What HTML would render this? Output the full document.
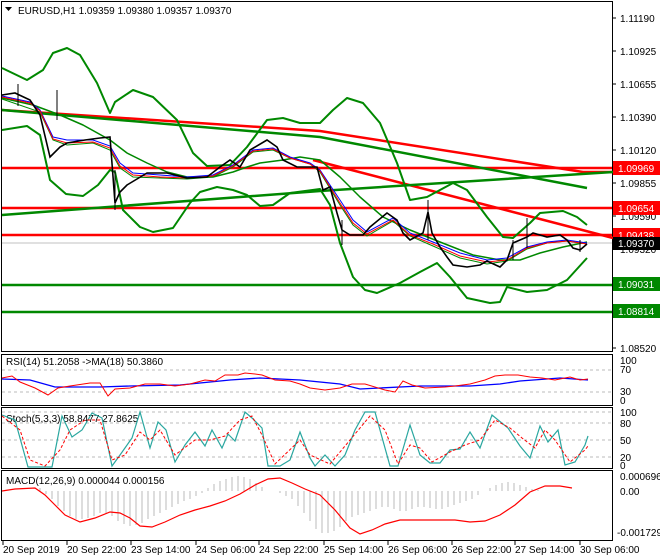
<!DOCTYPE html>
<html><head><style>
body{margin:0;background:#fff}
svg{display:block;font-family:"Liberation Sans",sans-serif;font-size:10px}
</style></head><body>
<svg width="660" height="560" viewBox="0 0 660 560">
<rect width="660" height="560" fill="#fff"/>
<g fill="none" stroke="#000" stroke-width="1">
<rect x="1.5" y="1.5" width="611" height="350"/>
<rect x="1.5" y="354.5" width="611" height="51"/>
<rect x="1.5" y="407.5" width="611" height="61"/>
<rect x="1.5" y="470.5" width="611" height="70"/>
</g>
<g stroke="#000">
<line x1="612" y1="18" x2="616" y2="18"/><line x1="612" y1="51" x2="616" y2="51"/><line x1="612" y1="84" x2="616" y2="84"/><line x1="612" y1="117" x2="616" y2="117"/><line x1="612" y1="150" x2="616" y2="150"/><line x1="612" y1="183" x2="616" y2="183"/><line x1="612" y1="216" x2="616" y2="216"/><line x1="612" y1="249" x2="616" y2="249"/><line x1="612" y1="282" x2="616" y2="282"/><line x1="612" y1="315" x2="616" y2="315"/><line x1="612" y1="348" x2="616" y2="348"/>
</g>
<g fill="#000">
<text x="620" y="22">1.11190</text><text x="620" y="55">1.10925</text><text x="620" y="88">1.10655</text><text x="620" y="121">1.10390</text><text x="620" y="154">1.10120</text><text x="620" y="187">1.09855</text><text x="620" y="220">1.09590</text><text x="620" y="253">1.09320</text><text x="620" y="352">1.08520</text>
</g>
<g stroke="#bbb" stroke-dasharray="3,3">
<line x1="2" y1="370" x2="612" y2="370"/><line x1="2" y1="392" x2="612" y2="392"/>
<line x1="2" y1="412" x2="612" y2="412"/><line x1="2" y1="423" x2="612" y2="423"/><line x1="2" y1="440" x2="612" y2="440"/><line x1="2" y1="457" x2="612" y2="457"/>
</g>
<line x1="2" y1="243" x2="612" y2="243" stroke="#c0c0c0"/>
<g stroke-width="2.5">
<line x1="2" y1="168" x2="612" y2="168" stroke="#f00"/>
<line x1="2" y1="208" x2="612" y2="208" stroke="#f00"/>
<line x1="2" y1="235" x2="612" y2="235" stroke="#f00"/>
<line x1="2" y1="285" x2="612" y2="285" stroke="#080"/>
<line x1="2" y1="312" x2="612" y2="312" stroke="#080"/>
</g>
<g stroke-width="2.5" fill="none">
<polyline points="2,110 320,131 583,172 612,172" stroke="#f00"/>
<polyline points="2,110 320,137 587,188" stroke="#080"/>
<polyline points="313,160 613,238" stroke="#f00"/>
<polyline points="2,215 320,191 613,172" stroke="#080"/>
</g>
<g stroke="#080" stroke-width="2" fill="none" stroke-linejoin="round">
<polyline points="2,68 27,80 43,70 53,53 67,48 80,55 97,83 110,113 115,102 133,90 153,97 177,120 193,153 207,166 230,165 247,147 267,120 283,118 300,123 320,123 333,110 347,98 363,103 380,123 397,163 410,200 427,197 453,183 467,190 487,217 503,237 513,238 530,223 540,213 563,211 577,217 587,225"/>
<polyline points="2,130 27,126 40,135 50,180 66,194 83,196 98,185 110,170 115,172 123,210 140,227 153,232 173,228 190,203 200,192 217,187 233,190 247,195 260,206 273,205 290,193 320,189 330,205 340,243 353,277 365,290 377,293 400,283 420,272 437,263 450,277 467,298 490,303 500,302 507,287 527,292 547,290 567,280 587,258"/>
<polyline points="2,98 33,105 60,115 83,125 110,140 127,153 147,163 167,172 187,177 213,177 233,172 247,167 260,163 283,160 300,157 320,160 340,177 360,197 383,217 410,230 440,242 473,255 500,260 520,260 540,253 563,247 587,242" stroke-width="1.5"/>
</g>
<polyline fill="none" stroke="#080" stroke-width="1" points="2,99 40,112 53,140 67,145 93,143 110,150 120,168 133,177 160,178 187,179 213,177 233,167 253,152 273,150 290,158 310,164 320,172 340,205 353,225 367,236 393,221 410,236 433,246 460,258 487,264 507,261 527,249 547,243 567,241 587,244"/>
<polyline fill="none" stroke="#00f" stroke-width="1" points="2,96 30,102 40,110 53,137 67,140 93,140 110,146 120,163 133,173 160,175 187,177 213,175 233,165 253,150 273,148 290,157 310,163 320,170 340,200 353,220 367,232 393,218 410,233 433,242 460,253 487,260 507,258 527,247 547,242 567,240 587,243"/>
<polyline fill="none" stroke="#f00" stroke-width="1" points="2,97 30,103 40,111 53,139 67,143 93,142 110,148 120,166 133,175 160,177 187,178 213,176 233,166 253,151 273,149 290,158 310,164 320,171 340,203 353,223 367,234 393,220 410,235 433,244 460,256 487,262 507,260 527,248 547,243 567,241 587,244"/>
<polyline fill="none" stroke="#000" stroke-width="1.6" points="2,95 15,93 30,100 40,115 50,157 60,147 67,143 85,140 100,138 110,137 115,203 120,192 127,185 147,173 167,173 187,178 207,177 220,167 230,160 240,167 250,150 267,140 277,147 283,160 297,167 317,167 323,190 330,187 337,213 342,230 350,235 363,235 370,227 387,213 397,220 403,233 410,240 423,233 428,212 432,233 440,247 447,257 453,265 467,267 480,265 487,261 500,267 507,260 513,243 527,237 533,233 547,237 560,235 567,240 573,248 580,250 587,244"/>
<g stroke="#000" stroke-width="1"><path d="M18,84v22M57,90v30M115,170v40M342,220v25M428,200v40M513,240v20M527,218v30M580,240v12"/></g>
<g font-size="10">
<rect x="613" y="161" width="47" height="14" fill="#f00"/><text x="618" y="172" fill="#fff">1.09969</text>
<rect x="613" y="201" width="47" height="14" fill="#f00"/><text x="618" y="212" fill="#fff">1.09654</text>
<rect x="613" y="228" width="47" height="14" fill="#f00"/><text x="618" y="239" fill="#fff">1.09438</text>
<rect x="613" y="237" width="47" height="13" fill="#000"/><text x="618" y="247" fill="#fff">1.09370</text>
<rect x="613" y="277" width="47" height="14" fill="#080"/><text x="618" y="288" fill="#fff">1.09031</text>
<rect x="613" y="304" width="47" height="14" fill="#080"/><text x="618" y="315" fill="#fff">1.08814</text>
</g>
<polygon points="5,7 12,7 8.5,11" fill="#000"/>
<text x="18" y="14" fill="#000">EURUSD,H1  1.09359 1.09380 1.09357 1.09370</text>
<text x="6" y="365">RSI(14) 51.2058  -&gt;MA(18) 50.3860</text>
<polyline fill="none" stroke="#00f" stroke-width="1.3" points="2,379 30,380 55,387 100,387 130,386 180,385 230,380 260,378 300,380 340,384 360,389 420,386 470,386 500,384 520,381 560,378 588,380"/>
<polyline fill="none" stroke="#f00" stroke-width="1" points="2,378 12,376 20,382 35,388 48,395 58,388 70,386 90,383 100,383 108,396 115,389 130,388 145,384 160,384 175,386 190,384 205,380 215,381 225,375 238,375 245,373 255,374 262,375 275,380 290,381 300,384 310,388 325,390 340,388 352,384 365,384 385,390 395,392 403,381 412,385 425,388 445,387 455,386 470,384 485,380 495,376 505,375 518,375 530,377 542,378 555,380 570,377 580,380 588,379"/>
<g font-size="10"><text x="620" y="364">100</text><text x="620" y="373">70</text><text x="620" y="395">30</text><text x="620" y="404">0</text></g>
<text x="6" y="422">Stoch(5,3,3) 58.8477 27.8625</text>
<polyline fill="none" stroke="#2aa7a0" stroke-width="1.2" points="2,415 15,420 28,467 42,467 52,467 62,416 72,437 82,430 92,413 102,418 112,466 120,455 132,438 140,412 150,448 158,422 166,430 175,462 185,445 195,432 205,446 212,430 222,448 228,434 235,441 245,412 252,418 262,428 268,466 280,466 290,460 300,432 310,458 315,466 325,455 335,466 345,455 355,430 365,412 375,412 390,466 398,466 410,425 420,455 430,463 440,463 450,450 460,449 470,432 480,448 492,415 508,428 520,446 530,458 540,426 548,442 558,430 565,465 575,462 585,445 588,436"/>
<polyline fill="none" stroke="#f00" stroke-width="1" stroke-dasharray="3,2" points="2,416 20,430 30,460 45,466 60,450 70,430 85,420 100,420 112,460 125,455 140,432 150,440 160,430 175,455 195,440 210,440 225,436 240,420 252,416 262,435 275,464 300,440 310,455 330,464 350,440 370,416 385,430 398,464 410,445 420,448 432,462 450,452 465,445 480,440 495,420 510,428 522,438 535,448 545,430 555,440 570,462 585,450 588,446"/>
<g font-size="10"><text x="620" y="416">100</text><text x="620" y="427">80</text><text x="620" y="444">50</text><text x="620" y="461">20</text><text x="620" y="469">0</text></g>
<text x="6" y="484">MACD(12,26,9) 0.000044 0.000156</text>
<g stroke="#bbb" stroke-width="1">
<path d="M40,491v-3M46,491v3M52,491v8M58,491v15M64,491v20M70,491v25M76,491v28M82,491v28M88,491v27M94,491v25M100,491v22M106,491v22M112,491v25M118,491v30M124,491v33M130,491v35M136,491v34M142,491v32M148,491v28M154,491v25M160,491v22M166,491v19M172,491v16M178,491v13M184,491v10M190,491v8M196,491v5M202,491v2M208,491v-3M214,491v-7M220,491v-10M226,491v-12M232,491v-14M238,491v-15M244,491v-14M250,491v-12M256,491v-8M262,491v-4M268,491v0M280,491v2M286,491v5M292,491v8M298,491v15M304,491v22M310,491v30M316,491v38M322,491v42M328,491v42M334,491v40M340,491v36M346,491v30M352,491v26M358,491v24M364,491v22M370,491v20M376,491v18M382,491v16M388,491v16M394,491v18M400,491v20M406,491v20M412,491v18M418,491v16M424,491v16M430,491v17M436,491v18M442,491v18M448,491v16M454,491v14M460,491v12M466,491v10M472,491v8M478,491v4M484,491v0M490,491v-3M496,491v-6M502,491v-8M508,491v-9M514,491v-8M520,491v-6M526,491v-4M532,491v-2M538,491v-1"/>
</g>
<polyline fill="none" stroke="#f00" stroke-width="1.2" points="2,491 15,489 35,488 45,495 55,505 65,515 80,522 95,518 110,512 120,513 130,518 140,526 152,527 165,522 180,515 195,510 210,506 225,501 240,494 255,485 268,479 280,478 292,483 305,489 320,495 335,510 350,528 360,534 372,530 385,524 400,520 415,520 435,520 455,520 470,522 485,521 500,515 515,505 530,492 545,486 560,486 572,488"/>
<g font-size="10"><text x="620" y="480">0.000696</text><text x="620" y="495">0.00</text><text x="617" y="536">-0.001729</text></g>
<g stroke="#000"><line x1="3" y1="541" x2="3" y2="545"/><line x1="67" y1="541" x2="67" y2="545"/><line x1="131" y1="541" x2="131" y2="545"/><line x1="196" y1="541" x2="196" y2="545"/><line x1="259" y1="541" x2="259" y2="545"/><line x1="324" y1="541" x2="324" y2="545"/><line x1="388" y1="541" x2="388" y2="545"/><line x1="452" y1="541" x2="452" y2="545"/><line x1="515" y1="541" x2="515" y2="545"/><line x1="580" y1="541" x2="580" y2="545"/></g>
<g font-size="10"><text x="3" y="553">20 Sep 2019</text><text x="67" y="553">20 Sep 22:00</text><text x="131" y="553">23 Sep 14:00</text><text x="196" y="553">24 Sep 06:00</text><text x="259" y="553">24 Sep 22:00</text><text x="324" y="553">25 Sep 14:00</text><text x="388" y="553">26 Sep 06:00</text><text x="452" y="553">26 Sep 22:00</text><text x="515" y="553">27 Sep 14:00</text><text x="580" y="553">30 Sep 06:00</text></g>
</svg>
</body></html>
